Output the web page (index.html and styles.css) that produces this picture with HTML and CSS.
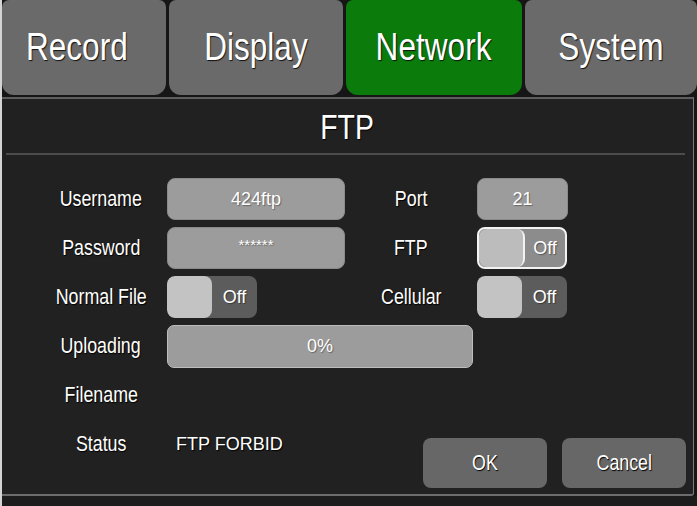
FILE: index.html
```html
<!DOCTYPE html>
<html lang="en">
<head>
<meta charset="utf-8">
<title>FTP</title>
<link rel="stylesheet" href="styles.css">
</head>
<body>
<div class="screen">
  <nav class="tabs">
    <div class="tab tab-first"><span class="cond">Record</span></div>
    <div class="tab"><span class="cond">Display</span></div>
    <div class="tab tab-active"><span class="cond">Network</span></div>
    <div class="tab"><span class="cond">System</span></div>
  </nav>
  <section class="panel">
    <h1 class="title"><span class="cond">FTP</span></h1>
    <div class="sep"></div>
    <div class="form">
      <div class="fields">
        <div class="label"><span class="cond">Username</span></div>
        <div class="field">424ftp</div>
        <div class="label"><span class="cond">Port</span></div>
        <div class="field">21</div>

        <div class="label"><span class="cond">Password</span></div>
        <div class="field field-pass">******</div>
        <div class="label"><span class="cond">FTP</span></div>
        <div class="toggle toggle-focus"><span class="knob"></span><span class="toggle-text">Off</span></div>

        <div class="label"><span class="cond">Normal File</span></div>
        <div class="cell-left"><div class="toggle"><span class="knob"></span><span class="toggle-text">Off</span></div></div>
        <div class="label"><span class="cond">Cellular</span></div>
        <div class="toggle"><span class="knob"></span><span class="toggle-text">Off</span></div>

        <div class="label"><span class="cond">Uploading</span></div>
        <div class="progress">0%</div>

        <div class="label row-start"><span class="cond">Filename</span></div>
      </div>
      <div class="footer">
        <div class="label status-label"><span class="cond">Status</span></div>
        <div class="status-value">FTP FORBID</div>
        <div class="buttons">
          <div class="btn"><span class="cond">OK</span></div>
          <div class="btn"><span class="cond">Cancel</span></div>
        </div>
      </div>
    </div>
  </section>
  <div class="base"></div>
</div>
</body>
</html>
```

FILE: styles.css
```css
html, body {
  margin: 0;
  padding: 0;
}
body {
  width: 697px;
  height: 506px;
  overflow: hidden;
  background: #1b1b1b;
  font-family: "Liberation Sans", Arial, sans-serif;
  color: #fff;
}
.screen {
  height: 506px;
  border-left: 2px solid #d4d4d4;
  display: flex;
  flex-direction: column;
  background: #161616;
}
.cond {
  display: inline-block;
  transform: scaleX(0.81);
  white-space: nowrap;
}
.tabs {
  display: grid;
  grid-template-columns: 164px 174px 176px 1fr;
  column-gap: 3px;
  height: 95px;
}
.tab {
  background: #6a6a6a;
  border-radius: 7px 7px 12px 12px;
  display: flex;
  align-items: center;
  justify-content: center;
  font-size: 39px;
  text-shadow: 1px 1px 1px #111;
  padding-bottom: 2px;
  box-sizing: border-box;
}
.tab-first {
  padding-right: 14px;
}
.tab-active {
  background: #0b7b0b;
}
.panel {
  margin-top: 2px;
  width: 691px;
  height: 395px;
  background: #212121;
  border-top: 2px solid #5e5e5e;
  border-bottom: 2px solid #6c6c6c;
  border-right: 1px solid #7a7a80;
  border-bottom-right-radius: 3px;
  display: flex;
  flex-direction: column;
}
.title {
  margin: 0;
  height: 54px;
  line-height: 56px;
  text-align: center;
  font-size: 35px;
  font-weight: normal;
  text-shadow: 1px 1px 1px #000;
}
.sep {
  height: 2px;
  margin: 0 8px 0 4px;
  background: #4c4c4c;
}
.form {
  padding: 23px 7px 0 34px;
}
.fields {
  display: grid;
  grid-template-columns: 130px 178px 130px 91px;
  column-gap: 1px;
  grid-auto-rows: 42px;
  row-gap: 7px;
}
.label {
  display: flex;
  align-items: center;
  justify-content: center;
  font-size: 22px;
  text-shadow: 1px 1px 1px #000;
}
.row-start {
  grid-column: 1;
}
.field {
  background: #9c9c9c;
  border: 1px solid #8a8a8a;
  border-radius: 8px;
  display: flex;
  align-items: center;
  justify-content: center;
  font-size: 18px;
  text-shadow: 1px 1px 1px rgba(0,0,0,0.35);
}
.field-pass {
  padding-bottom: 8px;
  font-size: 15px;
  box-sizing: border-box;
}
.cell-left {
  display: flex;
}
.toggle {
  width: 90px;
  height: 42px;
  box-sizing: border-box;
  background: #5c5c5c;
  border-radius: 8px;
  display: flex;
  overflow: hidden;
}
.knob {
  width: 45px;
  background: #c3c3c3;
  border-radius: 8px;
}
.toggle-text {
  flex: 1;
  display: flex;
  align-items: center;
  justify-content: center;
  font-size: 18px;
  text-shadow: 1px 1px 1px rgba(0,0,0,0.4);
}
.toggle-focus {
  border: 2px solid #f2f2f2;
  background: #8c8c8c;
}
.toggle-focus .knob {
  width: 44px;
  border-right: 2px solid #f2f2f2;
  background: #bcbcbc;
}
.progress {
  grid-column: 2 / 5;
  width: 306px;
  height: 43px;
  box-sizing: border-box;
  background: #9c9c9c;
  border: 1px solid #bdbdbd;
  border-radius: 7px;
  display: flex;
  align-items: center;
  justify-content: center;
  font-size: 18px;
  text-shadow: 1px 1px 1px rgba(0,0,0,0.35);
}
.footer {
  margin-top: 7px;
  display: flex;
  align-items: flex-start;
}
.status-label {
  width: 130px;
  height: 42px;
  margin-right: 1px;
}
.status-value {
  height: 42px;
  padding-left: 9px;
  display: flex;
  align-items: center;
  font-size: 18px;
  text-shadow: 1px 1px 1px #000;
}
.buttons {
  margin-left: auto;
  margin-top: 15px;
  display: flex;
  gap: 15px;
}
.btn {
  width: 124px;
  height: 50px;
  background: #676767;
  border-radius: 8px;
  display: flex;
  align-items: center;
  justify-content: center;
  font-size: 22px;
  text-shadow: 1px 1px 1px #000;
}
.base {
  flex: 1;
  background: #1c1c1c;
}
```
